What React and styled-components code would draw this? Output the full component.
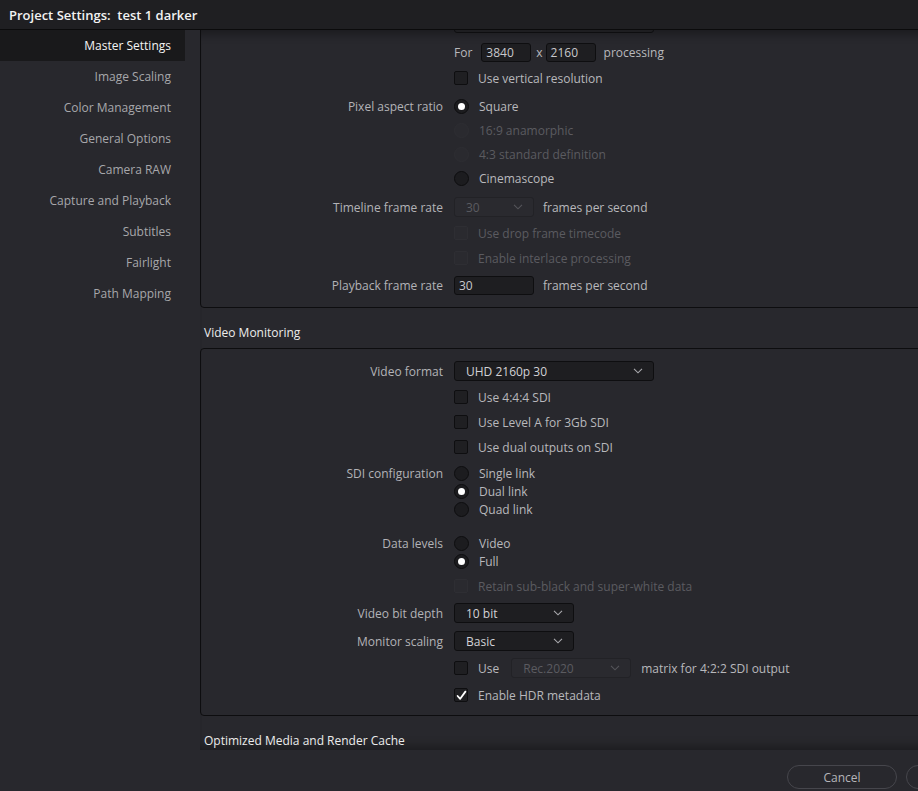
import React, { useLayoutEffect, useRef } from 'react';
import styled, { createGlobalStyle } from 'styled-components';

const Global = createGlobalStyle`
  html, body { margin: 0; padding: 0; background: #28282d; overflow: hidden; }
  body { font-family: 'Open Sans', 'Noto Sans', sans-serif; -webkit-font-smoothing: antialiased; }
  * { box-sizing: border-box; }
`;

const Dialog = styled.div`
  width: 1030px;
  height: 791px;
  display: flex;
  flex-direction: column;
  background: #28282d;
`;

const TitleBar = styled.div`
  flex: none;
  height: 30px;
  background: #1f1f22;
  border-bottom: 1px solid #0b0b0c;
  display: flex;
  align-items: center;
  padding-left: 9px;
  font-size: 13px;
  font-weight: 600;
  color: #f2f2f2;
  white-space: pre;
`;

const Body = styled.div`
  flex: 1;
  min-height: 0;
  display: flex;
`;

const Sidebar = styled.nav`
  flex: none;
  width: 200px;
  padding-right: 15px;
  display: flex;
  flex-direction: column;
`;

const NavItem = styled.div`
  height: 31px;
  display: flex;
  align-items: center;
  justify-content: flex-end;
  padding-right: 14px;
  font-size: 12px;
  color: ${p => (p.$active ? '#f4f4f4' : '#a7a7ab')};
  background: ${p => (p.$active ? '#19191b' : 'transparent')};
`;

const ScrollArea = styled.div`
  flex: 1;
  min-width: 0;
  overflow: hidden;
  box-shadow: inset 0 12px 10px -8px rgba(0, 0, 0, 0.35), inset 0 -12px 10px -8px rgba(0, 0, 0, 0.3);
`;

const Content = styled.div`
  padding-right: 14px;
  padding-bottom: 40px;
`;

const SectionHeader = styled.div`
  padding: 15px 4px 5px;
  line-height: 20px;
  font-size: 12px;
  color: #ececec;
`;

const GroupBox = styled.div`
  border: 1px solid #0d0d0f;
  border-radius: 4px;
  padding: ${p => p.$pt}px 0 ${p => p.$pb}px;
`;

const Row = styled.div`
  display: grid;
  grid-template-columns: 242px auto;
  column-gap: 11px;
  align-items: center;
  height: ${p => p.$h || 20}px;
  margin-top: ${p => p.$mt || 0}px;
`;

const Label = styled.div`
  text-align: right;
  font-size: 12px;
  color: #b3b3b7;
  white-space: nowrap;
`;

const Control = styled.div`
  display: flex;
  align-items: center;
  font-size: 12px;
  color: ${p => (p.$disabled ? '#5b5b60' : '#b8b8bc')};
  white-space: nowrap;
`;

const Text = styled.span`
  margin-left: ${p => p.$ml || 0}px;
  color: inherit;
`;

const Box = styled.span`
  flex: none;
  width: 14px;
  height: 14px;
  border-radius: 2px;
  border: 1px solid ${p => (p.$disabled ? '#2e2e33' : '#0e0e10')};
  background: ${p => (p.$disabled ? '#2a2a2f' : '#1f1f22')};
  display: inline-flex;
  align-items: center;
  justify-content: center;
  margin-right: 10px;
`;

const Radio = styled.span`
  flex: none;
  width: 15px;
  height: 15px;
  border-radius: 50%;
  border: 1px solid ${p => (p.$disabled ? '#2e2e33' : '#0d0d0f')};
  background: ${p => (p.$disabled ? '#2a2a2f' : '#1c1c1f')};
  display: inline-flex;
  align-items: center;
  justify-content: center;
  margin-right: 10px;
  &::after {
    content: '';
    display: ${p => (p.$on ? 'block' : 'none')};
    width: 7px;
    height: 7px;
    border-radius: 50%;
    background: #ffffff;
  }
`;

const Input = styled.div`
  width: ${p => p.$w}px;
  height: 19px;
  border: 1px solid #0e0e10;
  border-radius: 3px;
  background: #1e1e21;
  color: #c8c8cc;
  font-size: 12px;
  padding-left: 4px;
  display: flex;
  align-items: center;
`;

const Select = styled.div`
  width: ${p => p.$w}px;
  height: 20px;
  border: 1px solid ${p => (p.$disabled ? '#222226' : '#0e0e10')};
  border-radius: 3px;
  background: ${p => (p.$disabled ? '#2a2a2f' : '#1e1e21')};
  color: ${p => (p.$disabled ? '#5b5b60' : '#d2d2d6')};
  font-size: 12px;
  padding: 0 10px 0 11px;
  display: flex;
  align-items: center;
  justify-content: space-between;
`;

const Footer = styled.div`
  flex: none;
  height: 41px;
  display: flex;
  justify-content: flex-end;
  align-items: flex-start;
  gap: 9px;
  padding: 15px 14px 0 0;
`;

const Button = styled.div`
  width: 110px;
  height: 24px;
  border-radius: 12px;
  border: 1px solid #46464c;
  color: #b5b5b9;
  font-size: 12px;
  display: flex;
  align-items: center;
  justify-content: center;
`;

const Chevron = ({ dim }) => (
  <svg width="10" height="6" viewBox="0 0 10 6">
    <path d="M1 0.8 L5 4.8 L9 0.8" fill="none" stroke={dim ? '#55555a' : '#a9a9ad'} strokeWidth="1.1" />
  </svg>
);

const Check = () => (
  <svg width="11" height="11" viewBox="0 0 11 11">
    <path d="M1.6 6 L4.2 8.8 L9.4 1.6" fill="none" stroke="#ffffff" strokeWidth="1.8" strokeLinecap="round" strokeLinejoin="round" />
  </svg>
);

const Dropdown = ({ w, value, disabled }) => (
  <Select $w={w} $disabled={disabled}>
    <span>{value}</span>
    <Chevron dim={disabled} />
  </Select>
);

const CheckRow = ({ label, disabled, checked, mt }) => (
  <Row $mt={mt}>
    <span />
    <Control $disabled={disabled}>
      <Box $disabled={disabled}>{checked && <Check />}</Box>
      {label}
    </Control>
  </Row>
);

const RadioRow = ({ title, label, on, disabled, h, mt }) => (
  <Row $h={h} $mt={mt}>
    {title ? <Label>{title}</Label> : <span />}
    <Control $disabled={disabled}>
      <Radio $on={on} $disabled={disabled} />
      {label}
    </Control>
  </Row>
);

const nav = [
  'Master Settings',
  'Image Scaling',
  'Color Management',
  'General Options',
  'Camera RAW',
  'Capture and Playback',
  'Subtitles',
  'Fairlight',
  'Path Mapping',
];

export default function App() {
  const ref = useRef(null);
  useLayoutEffect(() => {
    if (ref.current) ref.current.scrollTop = 30;
  }, []);

  return (
    <>
      <Global />
      <Dialog>
        <TitleBar>{'Project Settings:  test 1 darker'}</TitleBar>
        <Body>
          <Sidebar>
            {nav.map((n, i) => (
              <NavItem key={n} $active={i === 0}>{n}</NavItem>
            ))}
          </Sidebar>
          <ScrollArea ref={ref}>
            <Content>
              <GroupBox $pt={12} $pb={12}>
                <Row>
                  <span />
                  <Control><Dropdown w={200} value="" /></Control>
                </Row>
                <Row $mt={9}>
                  <span />
                  <Control>
                    For
                    <Text $ml={9} />
                    <Input $w={50}>3840</Input>
                    <Text $ml={5}>x</Text>
                    <Text $ml={3} />
                    <Input $w={50}>2160</Input>
                    <Text $ml={8}>processing</Text>
                  </Control>
                </Row>
                <CheckRow mt={6} label="Use vertical resolution" />
                <RadioRow mt={6} h={24} title="Pixel aspect ratio" label="Square" on />
                <RadioRow h={24} label="16:9 anamorphic" disabled />
                <RadioRow h={24} label="4:3 standard definition" disabled />
                <RadioRow h={24} label="Cinemascope" />
                <Row $mt={7}>
                  <Label>Timeline frame rate</Label>
                  <Control>
                    <Dropdown w={80} value="30" disabled />
                    <Text $ml={9}>frames per second</Text>
                  </Control>
                </Row>
                <CheckRow mt={6} label="Use drop frame timecode" disabled />
                <CheckRow mt={5} label="Enable interlace processing" disabled />
                <Row $mt={7}>
                  <Label>Playback frame rate</Label>
                  <Control>
                    <Input $w={80}>30</Input>
                    <Text $ml={9}>frames per second</Text>
                  </Control>
                </Row>
              </GroupBox>

              <SectionHeader>Video Monitoring</SectionHeader>
              <GroupBox $pt={12} $pb={10}>
                <Row>
                  <Label>Video format</Label>
                  <Control><Dropdown w={200} value="UHD 2160p 30" /></Control>
                </Row>
                <CheckRow mt={6} label="Use 4:4:4 SDI" />
                <CheckRow mt={5} label="Use Level A for 3Gb SDI" />
                <CheckRow mt={5} label="Use dual outputs on SDI" />
                <RadioRow mt={7} h={18} title="SDI configuration" label="Single link" />
                <RadioRow h={18} label="Dual link" on />
                <RadioRow h={18} label="Quad link" />
                <RadioRow mt={16} h={18} title="Data levels" label="Video" />
                <RadioRow h={18} label="Full" on />
                <CheckRow mt={6} label="Retain sub-black and super-white data" disabled />
                <Row $mt={7}>
                  <Label>Video bit depth</Label>
                  <Control><Dropdown w={120} value="10 bit" /></Control>
                </Row>
                <Row $mt={8}>
                  <Label>Monitor scaling</Label>
                  <Control><Dropdown w={120} value="Basic" /></Control>
                </Row>
                <Row $mt={7}>
                  <span />
                  <Control>
                    <Box />
                    Use
                    <Text $ml={12} />
                    <Dropdown w={120} value="Rec.2020" disabled />
                    <Text $ml={10}>matrix for 4:2:2 SDI output</Text>
                  </Control>
                </Row>
                <CheckRow mt={7} label="Enable HDR metadata" checked />
              </GroupBox>

              <SectionHeader>Optimized Media and Render Cache</SectionHeader>
            </Content>
          </ScrollArea>
        </Body>
        <Footer>
          <Button>Cancel</Button>
          <Button />
        </Footer>
      </Dialog>
    </>
  );
}
